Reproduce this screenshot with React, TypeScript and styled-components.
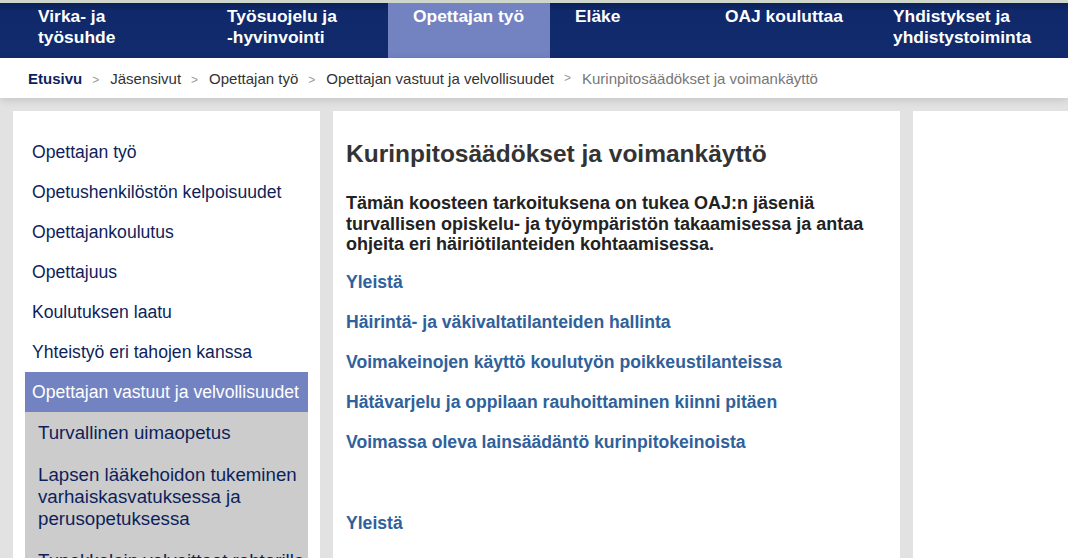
import styled, { createGlobalStyle } from 'styled-components';

const GlobalStyle = createGlobalStyle`
  html, body {
    margin: 0;
    padding: 0;
    overflow: hidden;
    background: #e2e2e2;
    font-family: "Liberation Sans", Arial, sans-serif;
  }
  * { box-sizing: border-box; }
`;

type NavEntry = { lines: string[]; w: number; active?: boolean };

const NAV: NavEntry[] = [
  { lines: ['Virka- ja', 'työsuhde'], w: 189 },
  { lines: ['Työsuojelu ja', '-hyvinvointi'], w: 186 },
  { lines: ['Opettajan työ'], w: 162, active: true },
  { lines: ['Eläke'], w: 150 },
  { lines: ['OAJ kouluttaa'], w: 168 },
  { lines: ['Yhdistykset ja', 'yhdistystoiminta'], w: 200 },
];

const CRUMBS = ['Jäsensivut', 'Opettajan työ', 'Opettajan vastuut ja velvollisuudet'];

const SIDE = [
  'Opettajan työ',
  'Opetushenkilöstön kelpoisuudet',
  'Opettajankoulutus',
  'Opettajuus',
  'Koulutuksen laatu',
  'Yhteistyö eri tahojen kanssa',
];

const SUB = [
  'Turvallinen uimaopetus',
  'Lapsen lääkehoidon tukeminen varhaiskasvatuksessa ja perusopetuksessa',
  'Tupakkalain velvoitteet rehtorille',
];

const LINKS = [
  'Yleistä',
  'Häirintä- ja väkivaltatilanteiden hallinta',
  'Voimakeinojen käyttö koulutyön poikkeustilanteissa',
  'Hätävarjelu ja oppilaan rauhoittaminen kiinni pitäen',
  'Voimassa oleva lainsäädäntö kurinpitokeinoista',
];

export default function App() {
  return (
    <>
      <GlobalStyle />
      <Nav>
        {NAV.map(n => (
          <NavItem key={n.lines[0]} $w={n.w} $active={!!n.active}>
            {n.lines.map((l, i) => (
              <span key={i}>{l}</span>
            ))}
          </NavItem>
        ))}
      </Nav>
      <Crumbs>
        <Home>Etusivu</Home>
        {CRUMBS.map(c => (
          <span key={c}>
            <Sep>&gt;</Sep>
            <Crumb>{c}</Crumb>
          </span>
        ))}
        <Sep>&gt;</Sep>
        <Current>Kurinpitosäädökset ja voimankäyttö</Current>
      </Crumbs>
      <Columns>
        <Sidebar>
          {SIDE.map(s => (
            <SideItem key={s}>{s}</SideItem>
          ))}
          <SideItem $active>Opettajan vastuut ja velvollisuudet</SideItem>
          <SubList>
            {SUB.map(s => (
              <SubItem key={s}>{s}</SubItem>
            ))}
          </SubList>
        </Sidebar>
        <Main>
          <Title>Kurinpitosäädökset ja voimankäyttö</Title>
          <Lead>
            Tämän koosteen tarkoituksena on tukea OAJ:n jäseniä turvallisen opiskelu- ja
            työympäristön takaamisessa ja antaa ohjeita eri häiriötilanteiden kohtaamisessa.
          </Lead>
          <LinkList>
            {LINKS.map(l => (
              <LinkItem key={l}>{l}</LinkItem>
            ))}
          </LinkList>
          <SectionHead>Yleistä</SectionHead>
        </Main>
        <Aside />
      </Columns>
    </>
  );
}

const Nav = styled.nav`
  display: flex;
  height: 58px;
  padding-left: 13px;
  background: linear-gradient(#0b2159 0px, #10296a 8px, #112b6d 100%);
  border-top: 3px solid #cfd6cc;
  overflow: hidden;
`;

const NavItem = styled.div<{ $w: number; $active: boolean }>`
  flex: 0 0 auto;
  width: ${({ $w }) => $w}px;
  padding: 3px 0 0 25px;
  display: flex;
  flex-direction: column;
  background: ${({ $active }) => ($active ? '#7383c1' : 'transparent')};
  color: #ffffff;
  font-weight: 700;
  font-size: 17.4px;
  line-height: 21px;
  white-space: nowrap;
`;

const Crumbs = styled.div`
  position: relative;
  z-index: 1;
  height: 40px;
  display: flex;
  align-items: center;
  padding-left: 28px;
  background: #ffffff;
  font-size: 15px;
  color: #333333;
  box-shadow: 0 2px 8px rgba(0, 0, 0, 0.14);
  white-space: nowrap;
`;

const Home = styled.span`
  font-weight: 700;
  color: #0d1f5c;
`;

const Sep = styled.span`
  margin: 0 11px 0 10px;
  color: #9a9a9a;
  font-size: 12px;
`;

const Crumb = styled.span`
  color: #333333;
`;

const Current = styled.span`
  color: #777777;
`;

const Columns = styled.div`
  display: grid;
  grid-template-columns: 307px 567px 1fr;
  gap: 13px;
  padding: 13px 0 0 13px;
  align-items: stretch;
`;

const Panel = styled.div`
  background: #ffffff;
  min-height: 460px;
`;

const Sidebar = styled(Panel)`
  padding: 21px 12px 0;
`;

const SideItem = styled.div<{ $active?: boolean }>`
  padding: 10px 0 10px 7px;
  font-size: 17.6px;
  line-height: 20px;
  color: ${({ $active }) => ($active ? '#ffffff' : '#0e1f5b')};
  background: ${({ $active }) => ($active ? '#7383c1' : 'transparent')};
  white-space: nowrap;
`;

const SubList = styled.div`
  background: #cccccc;
`;

const SubItem = styled.div`
  padding: 10px 0 10px 13px;
  font-size: 18.7px;
  line-height: 22px;
  color: #0e1f5b;
`;

const Main = styled(Panel)`
  padding: 28px 13px 0;
`;

const Title = styled.h1`
  margin: 0;
  font-size: 24.5px;
  line-height: 30px;
  font-weight: 700;
  color: #333333;
`;

const Lead = styled.p`
  margin: 24px 0 0;
  font-size: 18px;
  line-height: 20.7px;
  font-weight: 700;
  color: #222222;
`;

const LinkList = styled.div`
  display: flex;
  flex-direction: column;
  gap: 20px;
  margin-top: 17px;
`;

const LinkItem = styled.a`
  font-size: 17.6px;
  line-height: 20px;
  font-weight: 700;
  color: #2f619a;
  text-decoration: none;
`;

const SectionHead = styled.h2`
  margin: 61px 0 0;
  font-size: 17.6px;
  line-height: 20px;
  font-weight: 700;
  color: #2f619a;
`;

const Aside = styled(Panel)``;
